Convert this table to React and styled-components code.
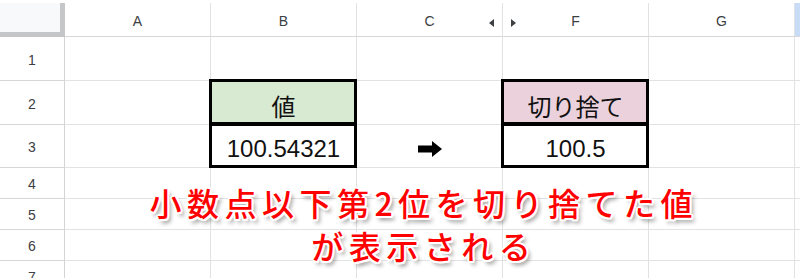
import styled, { createGlobalStyle, css } from "styled-components";

const GlobalStyle = createGlobalStyle`
  html, body {
    margin: 0;
    padding: 0;
    background: #ffffff;
    overflow: hidden;
  }
  body {
    font-family: "Liberation Sans", Arial, "Noto Sans CJK JP", sans-serif;
  }
`;

const COLS = ["A", "B", "C", "F", "G"];
const ROWS = [44, 44, 43, 31, 31, 31, 31];

// cells that hold something, keyed "col+row"
const CELLS = {
  B2: { text: "値", fill: "#d9ead3", boxed: true },
  B3: { text: "100.54321", boxed: true },
  C3: { arrow: true },
  F2: { text: "切り捨て", fill: "#ead1dc", boxed: true },
  F3: { text: "100.5", boxed: true },
};

const Page = styled.div`
  position: relative;
  width: 800px;
  height: 278px;
  padding-top: 3px;
  box-sizing: border-box;
  overflow: hidden;
`;

const Sheet = styled.div`
  display: grid;
  grid-template-columns: 65px repeat(5, 146px) 5px;
  grid-template-rows: 34px ${ROWS.map((h) => h + "px").join(" ")};
`;

const Corner = styled.div`
  background: #f8f9fa;
  border-right: 5px solid #c4c6c8;
  border-bottom: 5px solid #c4c6c8;
  box-sizing: border-box;
`;

const ColHead = styled.div`
  position: relative;
  display: flex;
  align-items: center;
  justify-content: center;
  border-right: 1px solid #e1e2e3;
  border-bottom: 1px solid #d6d7d8;
  box-sizing: border-box;
  font-size: 14px;
  color: #3c4043;
  padding-top: 2px;
`;

const HiddenMark = styled.span`
  position: absolute;
  top: 16px;
  width: 0;
  height: 0;
  border-top: 4px solid transparent;
  border-bottom: 4px solid transparent;
  ${(p) =>
    p.$dir === "left"
      ? css`
          right: 8px;
          border-right: 5px solid #3c4043;
        `
      : css`
          left: 8px;
          border-left: 5px solid #3c4043;
        `}
`;

const ScrollStrip = styled.div`
  background: ${(p) => (p.$head ? "#c9dcf7" : "#ffffff")};
  border-bottom: 1px solid ${(p) => (p.$head ? "#d6d7d8" : "#e1e2e3")};
  box-sizing: border-box;
`;

const RowHead = styled.div`
  display: flex;
  align-items: center;
  justify-content: center;
  border-right: 1px solid #d3d4d5;
  border-bottom: 1px solid #d6d7d8;
  box-sizing: border-box;
  font-size: 14px;
  color: #3c4043;
  padding-top: 2px;
`;

const Cell = styled.div`
  position: relative;
  display: flex;
  align-items: center;
  justify-content: center;
  background: ${(p) => p.$fill || "#ffffff"};
  border-right: 1px solid #e1e2e3;
  border-bottom: 1px solid #e1e2e3;
  box-sizing: border-box;
  font-size: 24px;
  color: #111111;
  padding-top: 6px;
  ${(p) =>
    p.$boxed &&
    css`
      &::after {
        content: "";
        position: absolute;
        left: -2px;
        top: -2px;
        right: -1px;
        bottom: -1px;
        border: 3px solid #000000;
        pointer-events: none;
      }
    `}
`;

const Caption = styled.div`
  position: absolute;
  left: 0;
  top: 181px;
  width: 842px;
  text-align: center;
  font-family: "Noto Sans CJK JP", "Noto Sans", sans-serif;
  font-weight: 500;
  font-size: 32px;
  line-height: 43px;
  letter-spacing: 5.5px;
  padding-left: 5.5px;
  box-sizing: border-box;
  color: #ff0000;
  text-shadow:
    -2px 0 0 #fff, 2px 0 0 #fff, 0 -2px 0 #fff, 0 2px 0 #fff,
    -1.5px -1.5px 0 #fff, 1.5px -1.5px 0 #fff, -1.5px 1.5px 0 #fff, 1.5px 1.5px 0 #fff,
    3px 4px 4px rgba(0, 0, 0, 0.45);
`;

function Arrow() {
  return (
    <svg width="26" height="18" viewBox="0 0 26 18">
      <path d="M1 5.5 H15 V1 L25 9 L15 17 V12.5 H1 Z" fill="#000" />
    </svg>
  );
}

export default function App() {
  return (
    <>
      <GlobalStyle />
      <Page>
        <Sheet>
          <Corner />
          {COLS.map((c) => (
            <ColHead key={c}>
              {c}
              {c === "C" && <HiddenMark $dir="left" />}
              {c === "F" && <HiddenMark $dir="right" />}
            </ColHead>
          ))}
          <ScrollStrip $head />
          {ROWS.map((h, i) => {
            const r = i + 1;
            return [
              <RowHead key={"h" + r}>{r}</RowHead>,
              ...COLS.map((c) => {
                const d = CELLS[c + r] || {};
                return (
                  <Cell key={c + r} $fill={d.fill} $boxed={d.boxed}>
                    {d.arrow ? <Arrow /> : d.text}
                  </Cell>
                );
              }),
              <ScrollStrip key={"s" + r} />,
            ];
          })}
        </Sheet>
        <Caption>
          小数点以下第2位を切り捨てた値
          <br />
          が表示される
        </Caption>
      </Page>
    </>
  );
}
